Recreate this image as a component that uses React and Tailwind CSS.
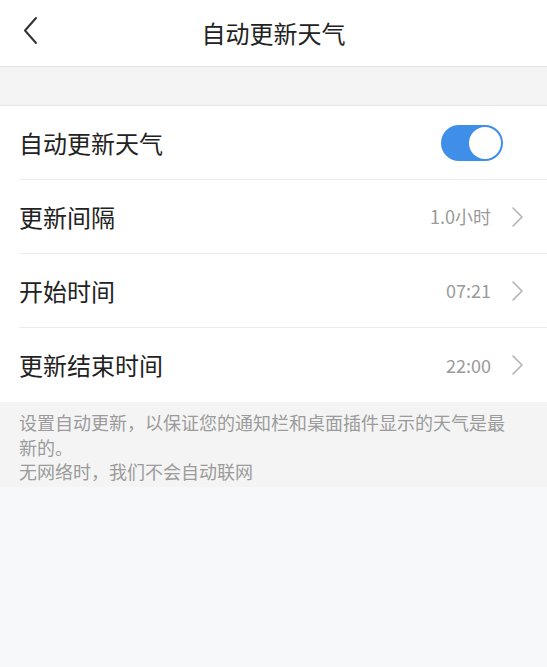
import React, { useState } from 'react';

const font = { fontFamily: '"Noto Sans CJK SC", "Noto Sans", sans-serif' };

function Chevron() {
  return (
    <svg width="14" height="22" viewBox="0 0 14 22" fill="none" className="ml-[20px]">
      <path d="M2 2 L11 11 L2 20" stroke="#b3b3b3" strokeWidth="1.6" strokeLinecap="round" strokeLinejoin="round" />
    </svg>
  );
}

function Toggle({ on, onChange }) {
  return (
    <button
      onClick={() => onChange(!on)}
      className={`mr-[22px] w-[62px] h-[36px] rounded-full p-[2px] flex items-center ${on ? 'bg-[#3f8ee8] justify-end' : 'bg-[#e5e5e5] justify-start'}`}
    >
      <span className="block w-[32px] h-[32px] rounded-full bg-white" />
    </button>
  );
}

function Row({ label, value, last, children }) {
  return (
    <div className="pl-[19px] bg-white">
      <div className={`h-[74px] flex items-center pr-[22px] ${last ? '' : 'border-b border-[#ececec]'}`}>
        <span className="text-[24px] text-[#222] flex-1">{label}</span>
        {children}
        {value && (
          <>
            <span className="text-[18px] text-[#9a9a9a]">{value}</span>
            <Chevron />
          </>
        )}
      </div>
    </div>
  );
}

export default function App() {
  const [auto, setAuto] = useState(true);

  return (
    <div className="min-h-[667px] bg-[#f7f8fa]" style={font}>
      {/* Header */}
      <div className="h-[67px] bg-white border-b border-[#e2e2e2] flex items-center relative">
        <svg width="20" height="30" viewBox="0 0 20 30" fill="none" className="absolute left-[20px] top-[16px]">
          <path d="M16 2 L5 14.5 L16 27" stroke="#333" strokeWidth="2" strokeLinecap="round" strokeLinejoin="round" />
        </svg>
        <h1 className="flex-1 text-center text-[24px] text-[#222]">自动更新天气</h1>
      </div>

      <div className="h-[39px] bg-[#f4f4f4] border-b border-[#e8e8e8]" />

      <Row label="自动更新天气">
        <Toggle on={auto} onChange={setAuto} />
      </Row>
      <Row label="更新间隔" value="1.0小时" />
      <Row label="开始时间" value="07:21" />
      <Row label="更新结束时间" value="22:00" last />

      <div className="bg-[#f4f4f4] pl-[19px] pr-[30px] pt-[8px] pb-[3px] text-[18px] leading-[24.5px] text-[#9b9b9b]">
        <p>设置自动更新，以保证您的通知栏和桌面插件显示的天气是最新的。</p>
        <p>无网络时，我们不会自动联网</p>
      </div>
    </div>
  );
}
